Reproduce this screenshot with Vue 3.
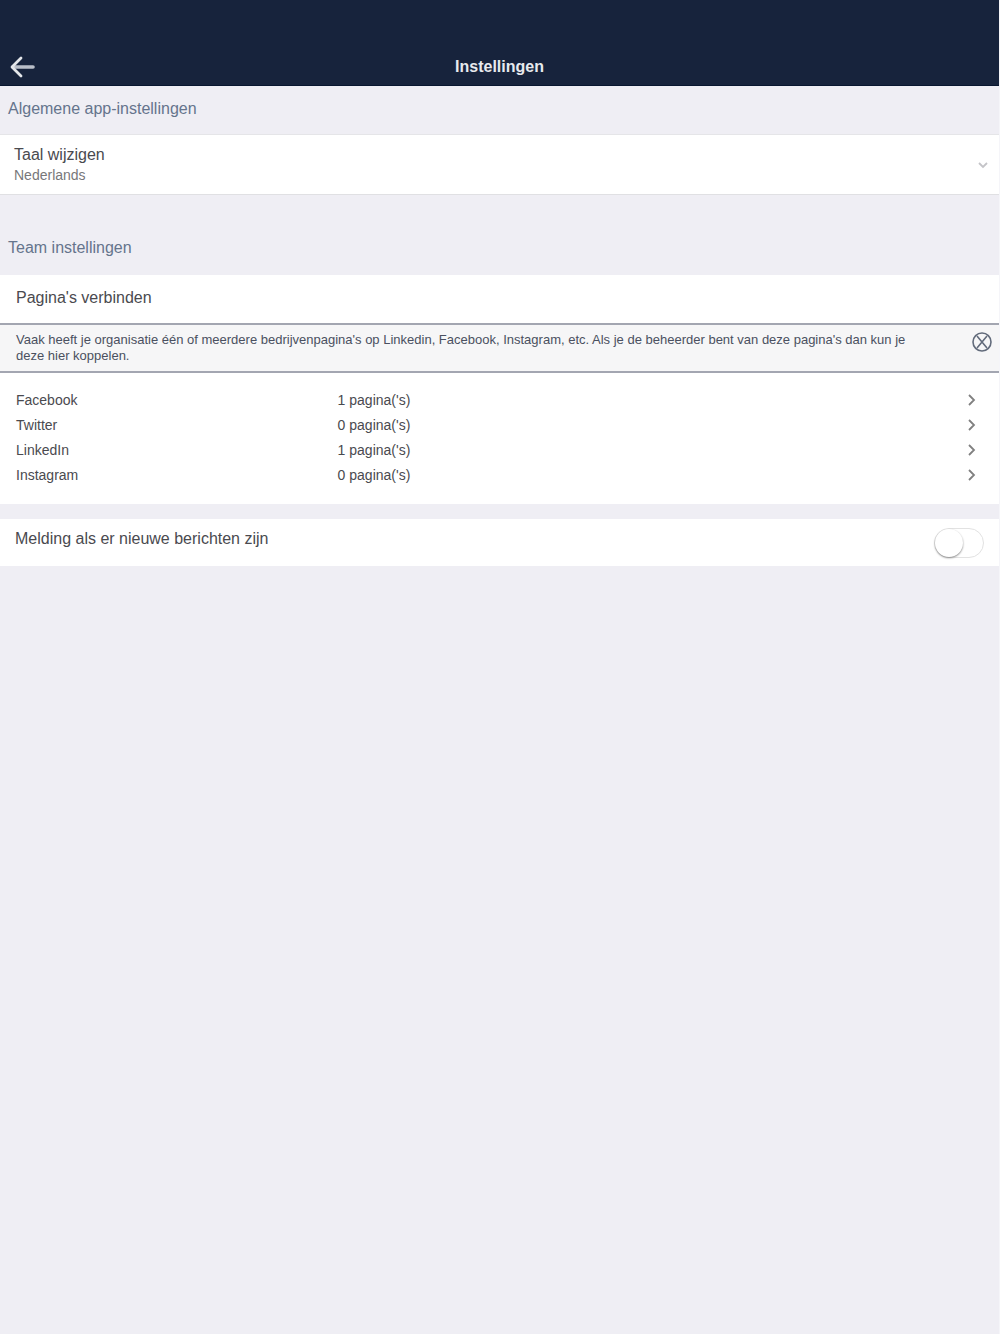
<script setup>
import { ref } from 'vue'

const language = ref('Nederlands')
const languages = ['Nederlands', 'English']
const infoVisible = ref(true)
const notify = ref(false)
const pages = [
  { name: 'Facebook', count: 1 },
  { name: 'Twitter', count: 0 },
  { name: 'LinkedIn', count: 1 },
  { name: 'Instagram', count: 0 },
]
</script>

<template>
  <div class="app">
    <header class="topbar">
      <button class="back" type="button" aria-label="Terug">
        <svg width="26" height="22" viewBox="0 0 26 22" fill="none" stroke-linecap="round" stroke-linejoin="round">
          <path d="M3 11H23" stroke="#b9bec8" stroke-width="3.6" />
          <path d="M11 2L2 11L11 20" stroke="#e4e6ea" stroke-width="2.8" />
        </svg>
      </button>
      <h1>Instellingen</h1>
    </header>

    <main>
      <h2 class="heading">Algemene app-instellingen</h2>
      <section class="language">
        <div class="language-text">
          <label for="language">Taal wijzigen</label>
          <select id="language" v-model="language">
            <option v-for="item in languages" :key="item">{{ item }}</option>
          </select>
        </div>
        <svg width="10" height="8" viewBox="0 0 10 8" fill="none" stroke="#c4c4c8" stroke-width="1.8">
          <path d="M1 2L5 6L9 2" />
        </svg>
      </section>

      <h2 class="heading team">Team instellingen</h2>
      <section class="card">
        <h3>Pagina's verbinden</h3>
        <div v-if="infoVisible" class="info">
          <p>
            Vaak heeft je organisatie één of meerdere bedrijvenpagina's op Linkedin, Facebook, Instagram, etc. Als je de
            beheerder bent van deze pagina's dan kun je deze hier koppelen.
          </p>
          <button type="button" aria-label="Sluiten" @click="infoVisible = false">
            <svg width="20" height="20" viewBox="0 0 20 20" fill="none" stroke="#626b7b" stroke-width="1.6">
              <circle cx="10" cy="10" r="9" />
              <path d="M5 4L15 16M15 4L5 16" />
            </svg>
          </button>
        </div>
        <ul>
          <li v-for="page in pages" :key="page.name">
            <a href="#">
              <span class="name">{{ page.name }}</span>
              <span class="count">{{ page.count }} pagina('s)</span>
              <svg width="8" height="12" viewBox="0 0 8 12" fill="none" stroke="#808080" stroke-width="1.8">
                <path d="M1 1L6 6L1 11" />
              </svg>
            </a>
          </li>
        </ul>
      </section>

      <section class="card notify">
        <label for="notify">Melding als er nieuwe berichten zijn</label>
        <input id="notify" v-model="notify" type="checkbox" role="switch" />
      </section>
    </main>
  </div>
</template>

<style>
body {
  margin: 0;
  background: #efeef4;
}
</style>

<style scoped>
.app {
  min-height: 100vh;
  box-sizing: border-box;
  border-right: 1px solid #f5f5f9;
  background: #efeef4;
  color: #4a4a4f;
  font-family: "Liberation Sans", Arial, sans-serif;
  font-size: 16px;
  line-height: 20px;
}
h1,
h2,
h3,
p,
ul {
  margin: 0;
  padding: 0;
  font-weight: normal;
}
button {
  display: flex;
  padding: 0;
  border: 0;
  background: none;
  cursor: pointer;
}
.topbar {
  display: grid;
  grid-template-columns: 1fr auto 1fr;
  align-items: center;
  height: 86px;
  box-sizing: border-box;
  padding: 49px 10px 0;
  border-bottom: 1px solid #081630;
  background: #17233c;
}
h1 {
  color: #e8eaee;
  font-size: 16px;
  font-weight: bold;
}
.heading {
  padding: 13px 8px 15px;
  color: #65748c;
  font-size: 16px;
}
.heading.team {
  padding: 43px 8px 17px;
}
.language {
  display: flex;
  align-items: center;
  justify-content: space-between;
  padding: 10px 11px 9px 14px;
  border-top: 1px solid #e5e5e8;
  border-bottom: 1px solid #e0e0e3;
  background: #fff;
}
.language-text {
  display: flex;
  flex-direction: column;
  flex: 1;
}
select {
  appearance: none;
  height: 20px;
  padding: 0;
  border: 0;
  background: none;
  color: #77777a;
  font: 14px/20px "Liberation Sans", Arial, sans-serif;
}
.card {
  background: #fff;
}
h3 {
  padding: 13px 16px 15px;
  font-size: 16px;
}
.info {
  display: flex;
  align-items: flex-start;
  justify-content: space-between;
  gap: 48px;
  padding: 7px 7px 7px 16px;
  border-top: 2px solid #a3a6b1;
  border-bottom: 2px solid #a3a6b1;
  background: #f6f6f7;
  color: #4a5060;
  font-size: 13px;
  line-height: 16px;
}
ul {
  padding: 14px 23px 17px 16px;
  list-style: none;
  font-size: 14px;
}
a {
  display: flex;
  align-items: center;
  height: 25px;
  color: inherit;
  text-decoration: none;
}
.name {
  box-sizing: border-box;
  width: 33.5%;
}
.count {
  flex: 1;
}
.notify {
  display: flex;
  align-items: center;
  justify-content: space-between;
  margin-top: 15px;
  padding: 8px 15px 7px;
}
.notify label {
  padding-bottom: 8px;
}
input {
  appearance: none;
  display: flex;
  align-items: center;
  width: 50px;
  height: 30px;
  margin: 1px 0;
  border: 1px solid #e2e2e2;
  border-radius: 15px;
  box-sizing: border-box;
  background: #fff;
}
input::before {
  content: "";
  width: 28px;
  height: 28px;
  border-radius: 14px;
  background: #fff;
  box-shadow: 0 1px 2px #888;
}
input:checked {
  justify-content: flex-end;
  background: #65748c;
}
</style>
